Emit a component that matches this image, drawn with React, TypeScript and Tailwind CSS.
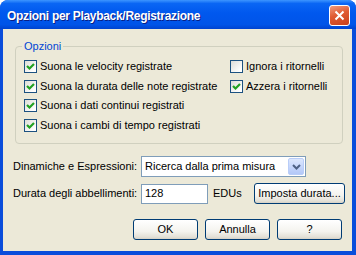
import React from 'react';

const FONT = "font-['Liberation_Sans',Arial,sans-serif]";

const Check: React.FC<{ checked: boolean }> = ({ checked }) => (
    <span className="w-[13px] h-[13px] shrink-0 border border-[#1c5180] bg-[linear-gradient(135deg,#dcdcd7,#ffffff_85%)] flex items-center justify-center">
        {checked && (
            <svg width="11" height="11" viewBox="0 0 11 11">
                <polyline points="2,5 4.5,7.5 9,3" fill="none" stroke="#21a121" strokeWidth="2.2" />
            </svg>
        )}
    </span>
);

const CheckRow: React.FC<{ label: string; checked: boolean }> = ({ label, checked }) => (
    <div className="flex items-center h-[13px] gap-[3px]">
        <Check checked={checked} />
        <span className="leading-[13px] whitespace-nowrap">{label}</span>
    </div>
);

const XpButton: React.FC<{ label: string; className?: string }> = ({ label, className = '' }) => (
    <button
        className={`h-[21px] border border-[#003c74] rounded-[3px] bg-[linear-gradient(180deg,#ffffff,#f4f3ee_60%,#e3e0d6_90%,#d6d0c5)] text-[11px] text-black flex items-center justify-center ${className}`}
    >
        {label}
    </button>
);

const App: React.FC = () => {
    return (
        <div className={`w-[356px] h-[255px] bg-white ${FONT}`}>
            <div className="w-[356px] h-[255px] flex flex-col rounded-t-[8px] bg-[#0a4ddb] overflow-hidden">
                {/* Title bar */}
                <div className="h-[29px] shrink-0 flex items-center justify-between pl-[7px] pr-[6px] bg-[linear-gradient(180deg,#3d95ff_0%,#0a66f4_12%,#0058ee_45%,#0054e8_85%,#0043cf_100%)]">
                    <span className="text-white font-bold text-[12px] tracking-[-0.3px] pt-[3px] [text-shadow:1px_1px_0_#0a1e84]">
                        Opzioni per Playback/Registrazione
                    </span>
                    <button className="w-[21px] h-[21px] mt-[2px] rounded-[3px] border border-white bg-[linear-gradient(160deg,#f09b7e,#e05a32_45%,#c8401c)] flex items-center justify-center">
                        <svg width="11" height="11" viewBox="0 0 11 11">
                            <path d="M1.5 1.5 L9.5 9.5 M9.5 1.5 L1.5 9.5" stroke="white" strokeWidth="2" />
                        </svg>
                    </button>
                </div>

                {/* Client area */}
                <div className="flex-1 ml-[3px] mr-[4px] mb-[4px] bg-[#ece9d8] text-[11px] text-black flex flex-col">
                    {/* Group box */}
                    <div className="relative mt-[17px] ml-[12px] w-[328px] h-[98px] border border-[#d0d0bf] rounded-[4px] pl-[8px] pt-[13px] flex">
                        <span className="absolute -top-[8px] left-[6px] px-[2px] bg-[#ece9d8] text-[#0046d5] leading-[14px]">
                            Opzioni
                        </span>
                        <div className="w-[206px] flex flex-col gap-[6.5px]">
                            <CheckRow label="Suona le velocity registrate" checked />
                            <CheckRow label="Suona la durata delle note registrate" checked />
                            <CheckRow label="Suona i dati continui registrati" checked />
                            <CheckRow label="Suona i cambi di tempo registrati" checked />
                        </div>
                        <div className="flex flex-col gap-[6.5px]">
                            <CheckRow label="Ignora i ritornelli" checked={false} />
                            <CheckRow label="Azzera i ritornelli" checked />
                        </div>
                    </div>

                    {/* Dinamiche */}
                    <div className="mt-[12px] pl-[10px] flex items-center">
                        <span className="w-[128px]">Dinamiche e Espressioni:</span>
                        <div className="w-[165px] h-[21px] border border-[#7f9db9] bg-white flex items-center justify-between pl-[3px] pr-[1px]">
                            <span>Ricerca dalla prima misura</span>
                            <span className="w-[16px] h-[17px] rounded-[2px] border border-[#b9cdf8] bg-[linear-gradient(180deg,#dce7fd,#c3d4fb_60%,#b3c8f8)] flex items-center justify-center">
                                <svg width="9" height="6" viewBox="0 0 9 6">
                                    <polyline points="1,1 4.5,4.5 8,1" fill="none" stroke="#4d6185" strokeWidth="2" />
                                </svg>
                            </span>
                        </div>
                    </div>

                    {/* Durata abbellimenti */}
                    <div className="mt-[6px] pl-[10px] flex items-center">
                        <span className="w-[128px]">Durata degli abbellimenti:</span>
                        <div className="w-[67px] h-[20px] border border-[#7f9db9] bg-white flex items-center pl-[3px]">
                            128
                        </div>
                        <span className="ml-[5px] w-[41px]">EDUs</span>
                        <XpButton label="Imposta durata..." className="w-[91px] h-[20px]" />
                    </div>

                    {/* Buttons */}
                    <div className="mt-[15px] pr-[10px] flex justify-end gap-[7px]">
                        <XpButton label="OK" className="w-[65px]" />
                        <XpButton label="Annulla" className="w-[65px]" />
                        <XpButton label="?" className="w-[65px]" />
                    </div>
                </div>
            </div>
        </div>
    );
};

export default App;
